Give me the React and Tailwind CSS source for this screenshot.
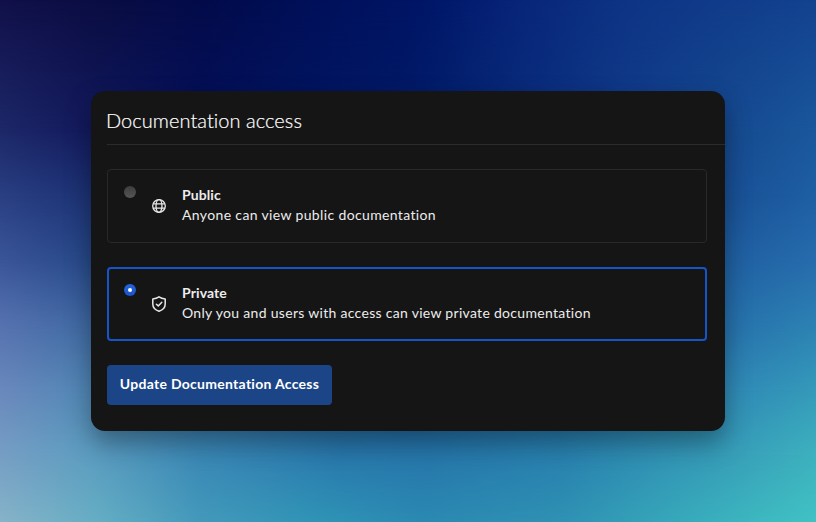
import { useState } from "react";

const layer = "col-start-1 row-start-1";

// Horizontal colour bands that fade into one another down the page.
function Backdrop() {
  return (
    <div aria-hidden="true" className={`${layer} grid h-[522px] w-[816px]`}>
      <div className={`${layer} bg-[linear-gradient(90deg,#11104a_0px,#0a0d42_100px,#030b4a_204px,#00105a_320px,#001566_420px,#08257a_520px,#0e3585_630px,#13428f_816px)]`} />
      <div className={`${layer} bg-[linear-gradient(90deg,#1d2868_0px,#141b5e_80px,#04105a_200px,#001a66_400px,#103a88_620px,#15498f_725px,#1a579c_816px)] [mask-image:linear-gradient(180deg,transparent_0px,#000_130px)]`} />
      <div className={`${layer} bg-[linear-gradient(90deg,#293f82_0px,#1c3274_91px,#10286f_400px,#194f95_725px,#1e5fa3_816px)] [mask-image:linear-gradient(180deg,transparent_130px,#000_195px)]`} />
      <div className={`${layer} bg-[linear-gradient(90deg,#3b5599_0px,#264888_91px,#10286f_400px,#1f5fa1_725px,#276cad_816px)] [mask-image:linear-gradient(180deg,transparent_195px,#000_260px)]`} />
      <div className={`${layer} bg-[linear-gradient(90deg,#5672b0_0px,#3f69a2_91px,#184a8a_400px,#2670ab_725px,#2c82b3_816px)] [mask-image:linear-gradient(180deg,transparent_260px,#000_325px)]`} />
      <div className={`${layer} bg-[linear-gradient(90deg,#6a88bc_0px,#5087b5_91px,#1f62a0_400px,#2f88b5_725px,#359aba_816px)] [mask-image:linear-gradient(180deg,transparent_325px,#000_390px)]`} />
      <div className={`${layer} bg-[linear-gradient(90deg,#769ec4_0px,#5c9dc0_91px,#3a88b6_200px,#2878ac_340px,#2677ab_430px,#2880ae_560px,#379db8_725px,#3db1be_816px)] [mask-image:linear-gradient(180deg,transparent_390px,#000_455px)]`} />
      <div className={`${layer} bg-[linear-gradient(90deg,#86b3c8_0px,#64adc3_100px,#4399ba_200px,#3095b6_310px,#2b89b1_420px,#2f91b3_560px,#38abbb_690px,#41c2c4_816px)] [mask-image:linear-gradient(180deg,transparent_455px,#000_522px)]`} />
    </div>
  );
}

function GlobeIcon() {
  return (
    <svg width="14" height="14" viewBox="0 0 14 14" fill="none" stroke="currentColor" strokeWidth="1.3">
      <circle cx="7" cy="7" r="6.3" />
      <ellipse cx="7" cy="7" rx="3" ry="6.3" />
      <path d="M1.2 4.8h11.6M1.2 9.2h11.6" />
    </svg>
  );
}

function ShieldIcon() {
  return (
    <svg width="14" height="16" viewBox="0 0 14 16" fill="none" stroke="currentColor" strokeWidth="1.5" strokeLinejoin="round" strokeLinecap="round">
      <path d="M7 .8 C5.2 2.1 3.3 2.7 .8 2.9 V8 C.8 11.4 3.2 14 7 15.2 C10.8 14 13.2 11.4 13.2 8 V2.9 C10.7 2.7 8.8 2.1 7 .8Z" />
      <path d="M4.4 8.2 6.3 9.9 9.8 6.2" />
    </svg>
  );
}

function Option({ title, text, icon, checked, onSelect }) {
  return (
    <button
      type="button"
      role="radio"
      aria-checked={checked}
      onClick={onSelect}
      className={
        checked
          ? "flex h-[74px] w-[600px] items-start rounded border-2 border-[#1554cb] pt-[15px] pl-[15px] text-left"
          : "flex h-[74px] w-[600px] items-start rounded border border-[#292929] p-4 text-left"
      }
    >
      <span
        className={
          checked
            ? "flex size-3 items-center justify-center rounded-full bg-linear-to-b from-[#2564de] to-[#1b53ca]"
            : "size-3 rounded-full bg-linear-to-b from-[#3e3e3e] to-[#555]"
        }
      >
        {checked && <span className="size-1 rounded-full bg-white" />}
      </span>
      <span className="ml-4 flex h-[40px] w-[30px] items-center text-[#e8e8e8]">{icon}</span>
      <span className="-mt-px flex flex-col text-[14px] leading-5 whitespace-nowrap text-[#ececec]">
        <span className="font-bold tracking-[0.1px]">{title}</span>
        <span className={checked ? "tracking-[0.3px]" : "tracking-[0.36px]"}>{text}</span>
      </span>
    </button>
  );
}

export default function App() {
  const [access, setAccess] = useState("private");
  return (
    <main className="grid h-[522px] w-[816px] overflow-hidden font-['Lato','Open_Sans',sans-serif]">
      <Backdrop />
      <section className={`${layer} z-10 mt-[91px] ml-[91px] h-[340px] w-[634px] rounded-[14px] bg-[#151515] pl-4 shadow-[0_12px_26px_rgba(0,0,0,0.34)]`}>
        <header className="flex h-[54px] items-center border-b border-[#2a2b2c] pt-[5px]">
          <h1 className="-ml-px text-[20px] font-light tracking-[0.05px] whitespace-nowrap text-white [font-variant-ligatures:none] [-webkit-text-stroke:0.2px_#fff]">Documentation access</h1>
        </header>
        <div role="radiogroup" className="mt-6 flex flex-col gap-6">
          <Option title="Public" text="Anyone can view public documentation" icon={<GlobeIcon />} checked={access === "public"} onSelect={() => setAccess("public")} />
          <Option title="Private" text="Only you and users with access can view private documentation" icon={<ShieldIcon />} checked={access === "private"} onSelect={() => setAccess("private")} />
        </div>
        <button type="button" className="mt-6 flex h-10 w-[225px] items-center justify-center rounded bg-[#1c4587] pb-[3px] text-[14px] font-bold tracking-[0.28px] whitespace-nowrap text-white">
          Update Documentation Access
        </button>
      </section>
    </main>
  );
}
